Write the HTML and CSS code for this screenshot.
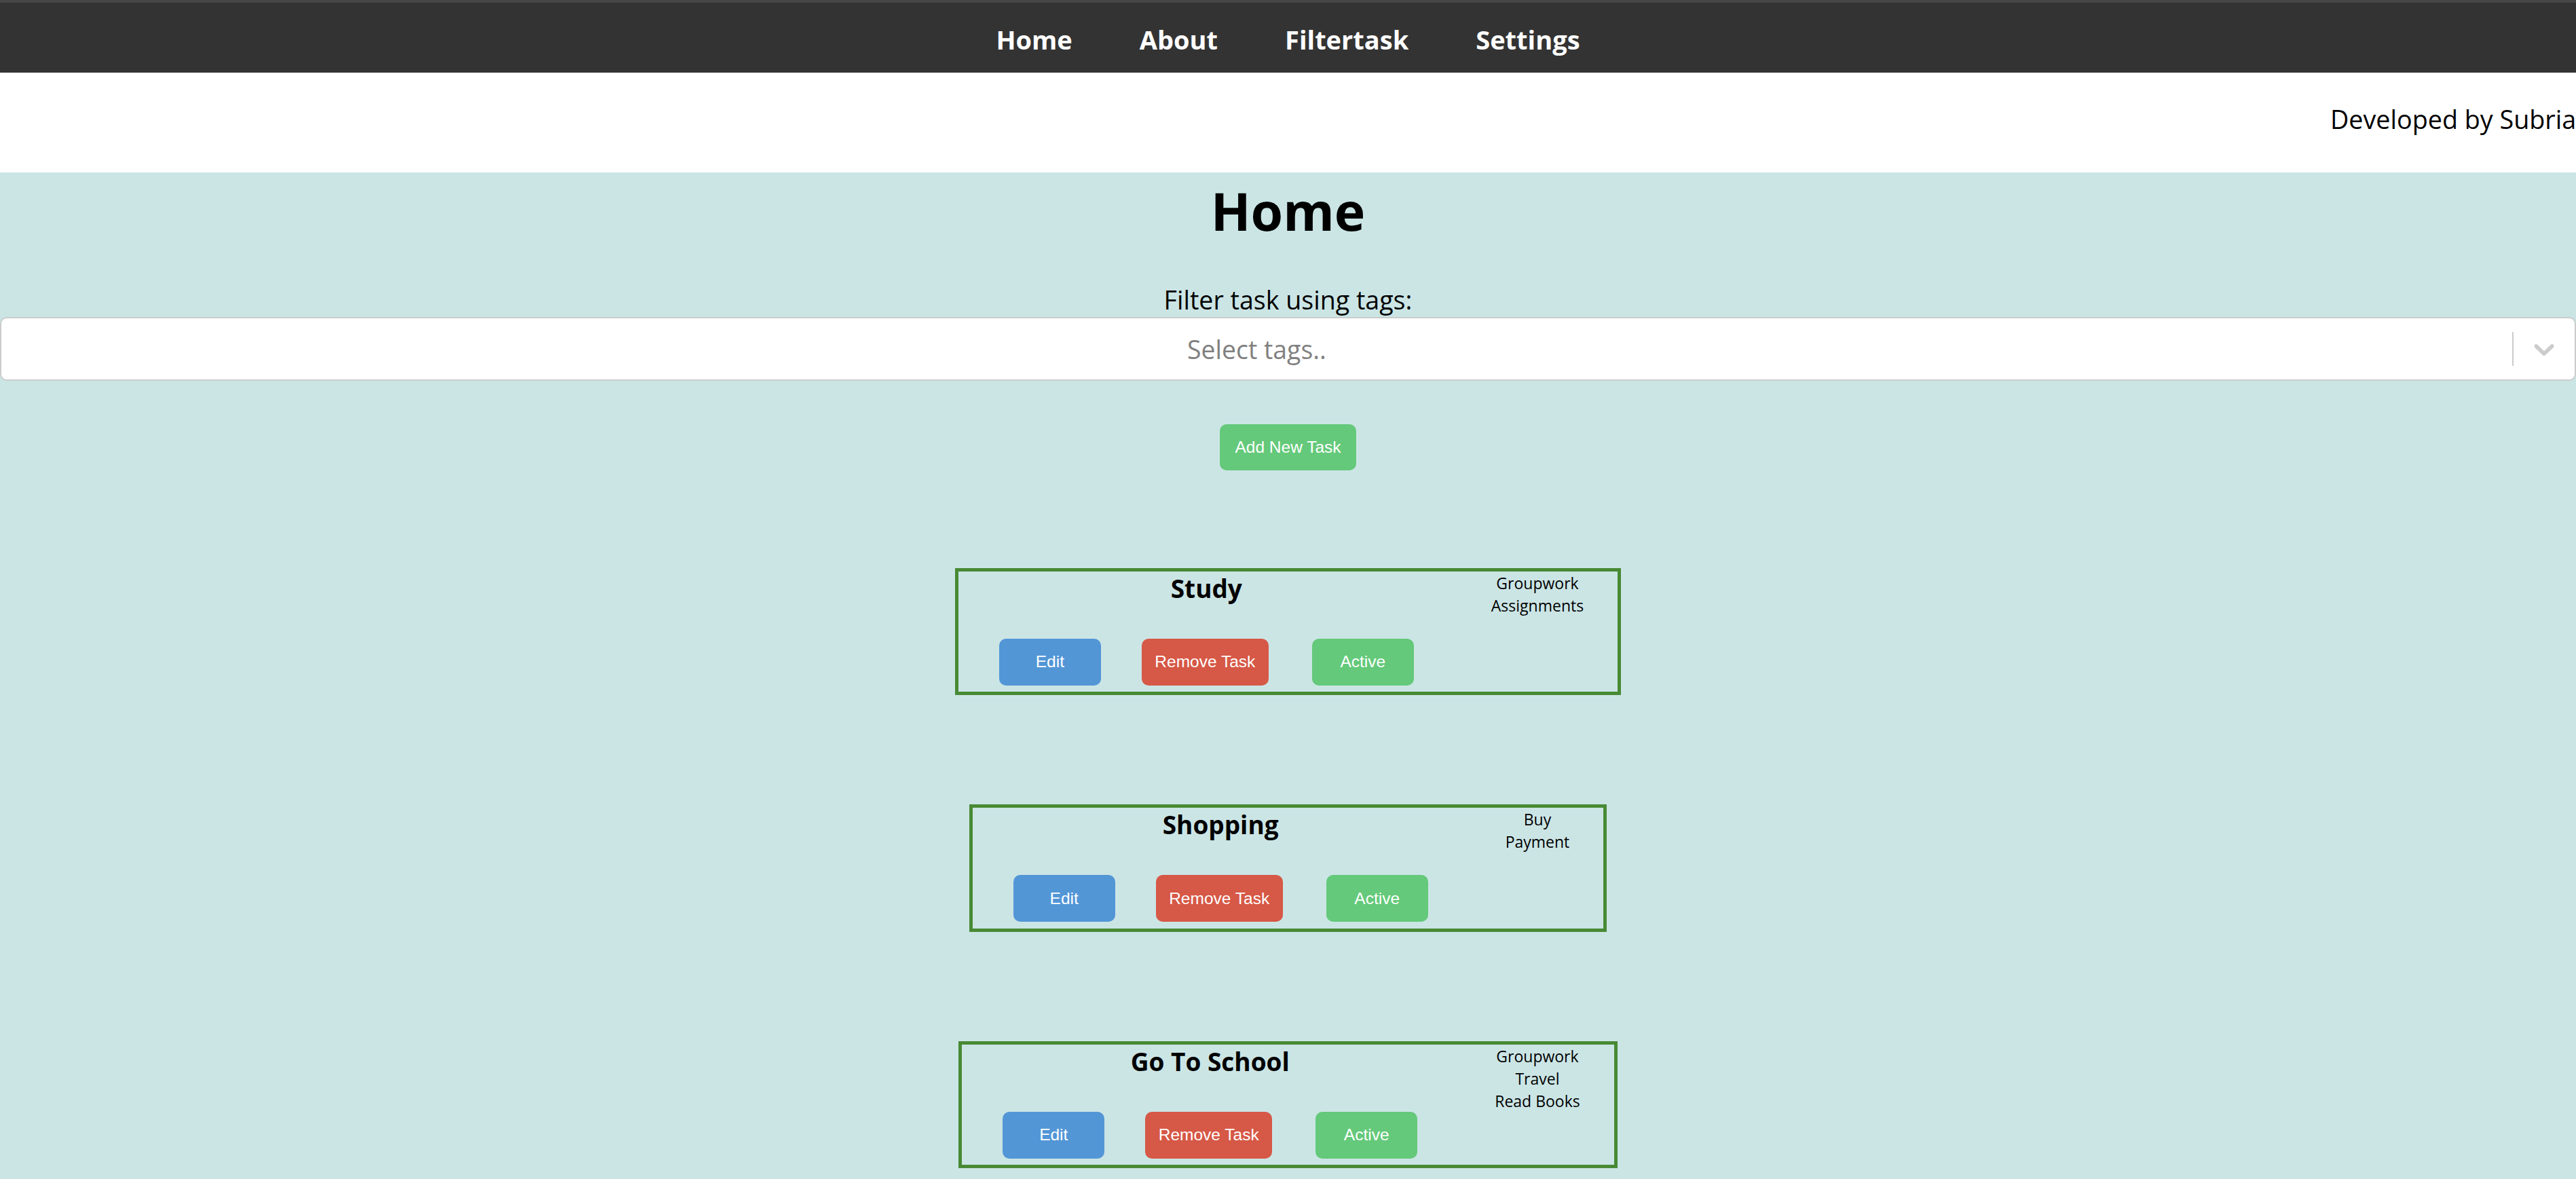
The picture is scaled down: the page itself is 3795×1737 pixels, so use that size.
FILE: index.html
```html
<!DOCTYPE html>
<html lang="en">
<head>
<meta charset="utf-8">
<title>Home</title>
<link rel="stylesheet" href="styles.css">
</head>
<body>
<nav class="topnav">
  <a class="nav-link" href="#">Home</a>
  <a class="nav-link" href="#">About</a>
  <a class="nav-link" href="#">Filtertask</a>
  <a class="nav-link" href="#">Settings</a>
</nav>
<header class="credit">
  <span class="credit-text">Developed by Subria</span>
</header>
<main class="page">
  <h1 class="page-title">Home</h1>
  <label class="filter-label">Filter task using tags:</label>
  <div class="select">
    <div class="select-value">Select tags..</div>
    <span class="select-sep"></span>
    <div class="select-indicator">
      <svg class="chevron" viewBox="0 0 20 20" aria-hidden="true"><path d="M4.516 7.548c0.436-0.446 1.043-0.481 1.576 0l3.908 3.747 3.908-3.747c0.533-0.481 1.141-0.446 1.574 0 0.436 0.445 0.408 1.197 0 1.615-0.406 0.418-4.695 4.502-4.695 4.502-0.217 0.223-0.502 0.335-0.787 0.335s-0.57-0.112-0.789-0.335c0 0-4.287-4.084-4.695-4.502s-0.436-1.170 0-1.615z"/></svg>
    </div>
  </div>
  <button class="btn btn-green btn-add">Add New Task</button>
  <section class="task-list">
    <div class="card">
      <div class="card-main">
        <h3 class="card-title">Study</h3>
        <div class="card-actions">
          <button class="btn btn-blue btn-action">Edit</button>
          <button class="btn btn-red btn-action btn-remove">Remove Task</button>
          <button class="btn btn-green btn-action">Active</button>
        </div>
      </div>
      <div class="tags">
        <div>Groupwork</div>
        <div>Assignments</div>
      </div>
    </div>
    <div class="card">
      <div class="card-main">
        <h3 class="card-title">Shopping</h3>
        <div class="card-actions">
          <button class="btn btn-blue btn-action">Edit</button>
          <button class="btn btn-red btn-action btn-remove">Remove Task</button>
          <button class="btn btn-green btn-action">Active</button>
        </div>
      </div>
      <div class="tags">
        <div>Buy</div>
        <div>Payment</div>
      </div>
    </div>
    <div class="card">
      <div class="card-main">
        <h3 class="card-title">Go To School</h3>
        <div class="card-actions">
          <button class="btn btn-blue btn-action">Edit</button>
          <button class="btn btn-red btn-action btn-remove">Remove Task</button>
          <button class="btn btn-green btn-action">Active</button>
        </div>
      </div>
      <div class="tags">
        <div>Groupwork</div>
        <div>Travel</div>
        <div>Read Books</div>
      </div>
    </div>
  </section>
</main>
</body>
</html>
```
FILE: styles.css
```css
html, body {
  margin: 0;
  padding: 0;
}
body {
  background: #cbe5e5;
  font-family: "Open Sans", "Noto Sans", "DejaVu Sans", sans-serif;
  color: #000;
  min-height: 100vh;
  overflow-x: hidden;
}
.topnav {
  box-sizing: border-box;
  height: 107px;
  border-top: 4px solid #464646;
  background: #333333;
  display: flex;
  justify-content: center;
  align-items: center;
  gap: 99px;
  padding-top: 6px;
}
.nav-link {
  color: #fff;
  text-decoration: none;
  font-weight: 700;
  font-size: 38px;
  line-height: 1.362;
}
.credit {
  box-sizing: border-box;
  height: 147px;
  background: #fff;
  padding-top: 43px;
  padding-left: 3433px;
  white-space: nowrap;
  overflow: hidden;
}
.credit-text {
  font-size: 37.7px;
  line-height: 1.362;
}
.page {
  display: flex;
  flex-direction: column;
  align-items: center;
  padding-bottom: 20px;
}
.page-title {
  margin: 5px 0 0;
  font-size: 77px;
  font-weight: 700;
  line-height: 1.362;
}
.filter-label {
  margin-top: 52px;
  font-size: 37.6px;
  line-height: 1.362;
}
.select {
  box-sizing: border-box;
  align-self: stretch;
  height: 94px;
  background: #fff;
  border: 2px solid #cccccc;
  border-radius: 10px;
  display: flex;
  align-items: center;
}
.select-value {
  flex: 1;
  text-align: center;
  color: #808080;
  font-size: 37.4px;
  line-height: 1.362;
  padding-top: 2px;
}
.select-sep {
  align-self: stretch;
  width: 2px;
  margin: 20px 0;
  background: #cccccc;
}
.select-indicator {
  padding: 0 20px;
  display: flex;
  align-items: center;
}
.chevron {
  width: 50px;
  height: 50px;
  fill: #cccccc;
  display: block;
}
.btn {
  border: none;
  color: #fff;
  font-family: "Liberation Sans", Arial, sans-serif;
  font-size: 24.5px;
  border-radius: 10px;
  cursor: pointer;
}
.btn-green { background: #64c97a; }
.btn-blue { background: #5296d6; }
.btn-red { background: #d65846; }
.btn-add {
  margin-top: 64px;
  width: 201px;
  height: 68px;
  padding: 0;
}
.task-list {
  margin-top: 144px;
  display: flex;
  flex-direction: column;
  align-items: center;
  gap: 161px;
}
.card {
  display: flex;
  align-items: flex-start;
  border: 5px solid #488a34;
}
.card-main {
  padding-left: 60px;
  display: flex;
  flex-direction: column;
  align-items: center;
}
.card-title {
  margin: 0;
  font-size: 37px;
  font-weight: 700;
  line-height: 1.362;
}
.card-actions {
  margin-top: 48.5px;
  margin-bottom: 9.5px;
  display: flex;
  gap: 60px;
}
.btn-action {
  min-width: 150px;
  height: 69px;
  padding: 0 19.5px;
}
.btn-remove {
  margin-right: 4px;
}
.tags {
  margin-left: 114px;
  margin-right: 50px;
  padding-top: 1px;
  text-align: center;
  font-size: 23px;
  line-height: 33px;
}
```
